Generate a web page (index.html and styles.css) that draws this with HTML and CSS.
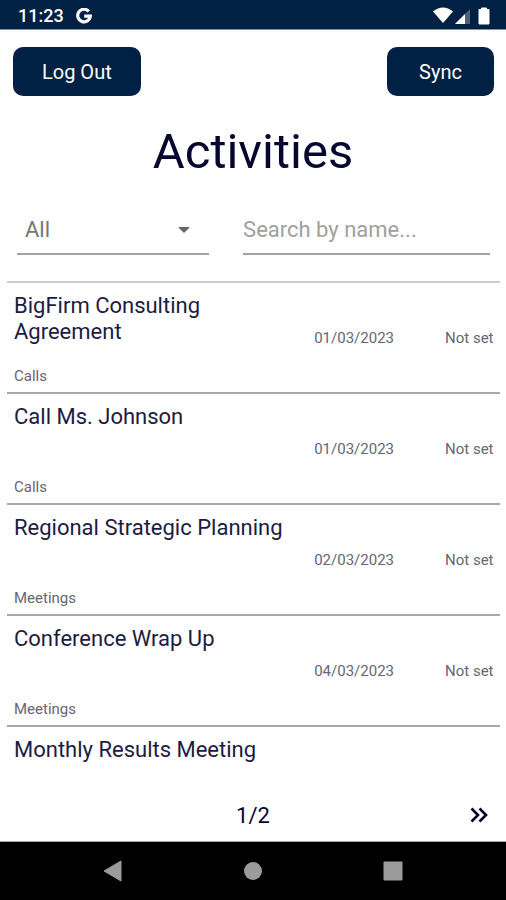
FILE: index.html
```html
<!DOCTYPE html>
<html lang="en">
<head>
<meta charset="utf-8">
<meta name="viewport" content="width=device-width, initial-scale=1">
<title>Activities</title>
<link rel="stylesheet" href="styles.css">
</head>
<body>
<div class="app">
  <div class="status-bar">
    <span class="clock">11:23</span>
    <svg class="google" viewBox="0 0 16 16" aria-hidden="true"><path d="M12.8 3.4A6.3 6.3 0 1 0 14.3 8.2H8.2" fill="none" stroke="#fff" stroke-width="3.2"/></svg>
    <svg class="signals" viewBox="0 0 58 18" aria-hidden="true">
      <path d="M0 4.5Q10-3.5 20 4.5L10 16Z" fill="#fff"/>
      <path d="M22 17 37 2V17Z" fill="#47617a"/>
      <path d="M22 17 32 7V17Z" fill="#fff"/>
      <path d="M46 2.500H48.500V1H53.500V2.500H56V17H46Z" fill="#fff" stroke="#fff" stroke-width="1" stroke-linejoin="round"/>
    </svg>
  </div>

  <header class="actions">
    <button class="button" type="button">Log Out</button>
    <button class="button" type="button">Sync</button>
  </header>

  <h1 class="title">Activities</h1>

  <form class="filters">
    <div class="select-field">
      <select class="field" aria-label="Activity type"><option>All</option></select>
      <svg class="caret" viewBox="0 0 12 6" aria-hidden="true"><path d="M0 0H12L6 6Z" fill="#666"/></svg>
    </div>
    <input class="field" type="text" aria-label="Search by name" placeholder="Search by name...">
  </form>

  <main class="list">
    <article class="row">
      <h2 class="name">BigFirm Consulting Agreement</h2>
      <span class="date">01/03/2023</span>
      <span class="state">Not set</span>
      <span class="kind">Calls</span>
    </article>
    <article class="row">
      <h2 class="name">Call Ms. Johnson</h2>
      <span class="date">01/03/2023</span>
      <span class="state">Not set</span>
      <span class="kind">Calls</span>
    </article>
    <article class="row">
      <h2 class="name">Regional Strategic Planning</h2>
      <span class="date">02/03/2023</span>
      <span class="state">Not set</span>
      <span class="kind">Meetings</span>
    </article>
    <article class="row">
      <h2 class="name">Conference Wrap Up</h2>
      <span class="date">04/03/2023</span>
      <span class="state">Not set</span>
      <span class="kind">Meetings</span>
    </article>
    <article class="row">
      <h2 class="name">Monthly Results Meeting</h2>
    </article>
  </main>

  <footer class="pager">
    <span class="page">1/2</span>
    <button class="next" type="button" aria-label="Next page">
      <svg viewBox="0 0 18 16" aria-hidden="true"><path d="M1.500 1.500 8 8 1.500 14.500M9.500 1.500 16 8 9.500 14.500" fill="none" stroke="#00002c" stroke-width="2.600"/></svg>
    </button>
  </footer>

  <nav class="system-nav">
    <button class="key" type="button" aria-label="Back"><svg viewBox="0 0 20 22" aria-hidden="true"><path d="M1 11 18 1V21Z" fill="#9b9b9b" stroke="#9b9b9b" stroke-linejoin="round"/></svg></button>
    <button class="key" type="button" aria-label="Home"><svg viewBox="0 0 20 22" aria-hidden="true"><circle cx="10" cy="11" r="9" fill="#9b9b9b"/></svg></button>
    <button class="key" type="button" aria-label="Recent apps"><svg viewBox="0 0 20 22" aria-hidden="true"><rect x="0.500" y="1.500" width="19" height="19" rx="1" fill="#9b9b9b"/></svg></button>
  </nav>
</div>
</body>
</html>
```
FILE: styles.css
```css
* {
  box-sizing: border-box;
}

body {
  margin: 0;
  background: #fff;
  color: #06062e;
  font-family: Roboto, "Liberation Sans", sans-serif;
}

button {
  padding: 0;
  border: 0;
  background: none;
  color: inherit;
  font: inherit;
}

svg {
  display: block;
}

.app {
  display: flex;
  flex-direction: column;
  height: 100vh;
}

.status-bar {
  display: flex;
  align-items: center;
  flex: none;
  height: 30px;
  padding: 2px 15px 0 18px;
  border-bottom: 1px solid #8a8f9f;
  background: #002144;
  color: #fff;
}

.clock {
  font-size: 18px;
  font-weight: 500;
}

.google {
  width: 16px;
  height: 16px;
  margin-left: 12px;
}

.signals {
  width: 58px;
  height: 18px;
  margin-left: auto;
}

.actions {
  display: flex;
  justify-content: space-between;
  padding: 17px 12px 0 13px;
}

.button {
  min-width: 107px;
  height: 49px;
  padding: 0 29px;
  border-radius: 10px;
  background: #002144;
  color: #fff;
  font-size: 20px;
}

.title {
  margin: 26px 0 0;
  font-size: 49px;
  font-weight: 400;
  line-height: 60px;
  text-align: center;
}

.filters {
  display: grid;
  grid-template-columns: 7fr 9fr;
  gap: 34px;
  padding: 23px 16px 26px 17px;
}

.select-field {
  position: relative;
}

.field {
  width: 100%;
  height: 50px;
  padding: 0;
  border: 0;
  border-bottom: 2px solid #a2a2a2;
  border-radius: 0;
  background: none;
  color: #767676;
  font-family: inherit;
  font-size: 22px;
  appearance: none;
}

select.field {
  padding-left: 8px;
}

.field::placeholder {
  color: #a0a0a0;
}

.caret {
  position: absolute;
  top: 22px;
  right: 19px;
  width: 12px;
  height: 6px;
}

.list {
  flex: 1;
  min-height: 0;
  margin: 0 6px 0 7px;
  overflow: hidden;
}

.row {
  display: grid;
  grid-template-columns: 1fr 81px 48px;
  grid-template-rows: 73px 1fr;
  column-gap: 51px;
  height: 111px;
  padding: 10px 7px 0;
  border-top: 2px solid #a8a8a8;
}

.row:first-child {
  border-top-color: #ccc;
}

.name {
  margin: 0 -24px 0 0;
  color: #1c1c42;
  font-size: 22px;
  font-weight: 400;
  line-height: 26px;
}

.date,
.state,
.kind {
  color: #666674;
  font-size: 15px;
  line-height: 20px;
  white-space: nowrap;
}

.date,
.state {
  padding-top: 35px;
  text-align: right;
}

.pager {
  display: grid;
  grid-template-columns: 1fr auto 1fr;
  align-items: center;
  flex: none;
  height: 72px;
  padding: 0 18px;
  border-bottom: 1px solid #aaa;
}

.page {
  grid-column: 2;
  padding-top: 20px;
  font-size: 22px;
}

.next {
  justify-self: end;
  padding-top: 18px;
}

.next svg {
  width: 18px;
  height: 16px;
}

.system-nav {
  display: flex;
  justify-content: center;
  align-items: center;
  gap: 120px;
  flex: none;
  height: 58px;
  background: #000;
}

.key svg {
  width: 20px;
  height: 22px;
}
```
